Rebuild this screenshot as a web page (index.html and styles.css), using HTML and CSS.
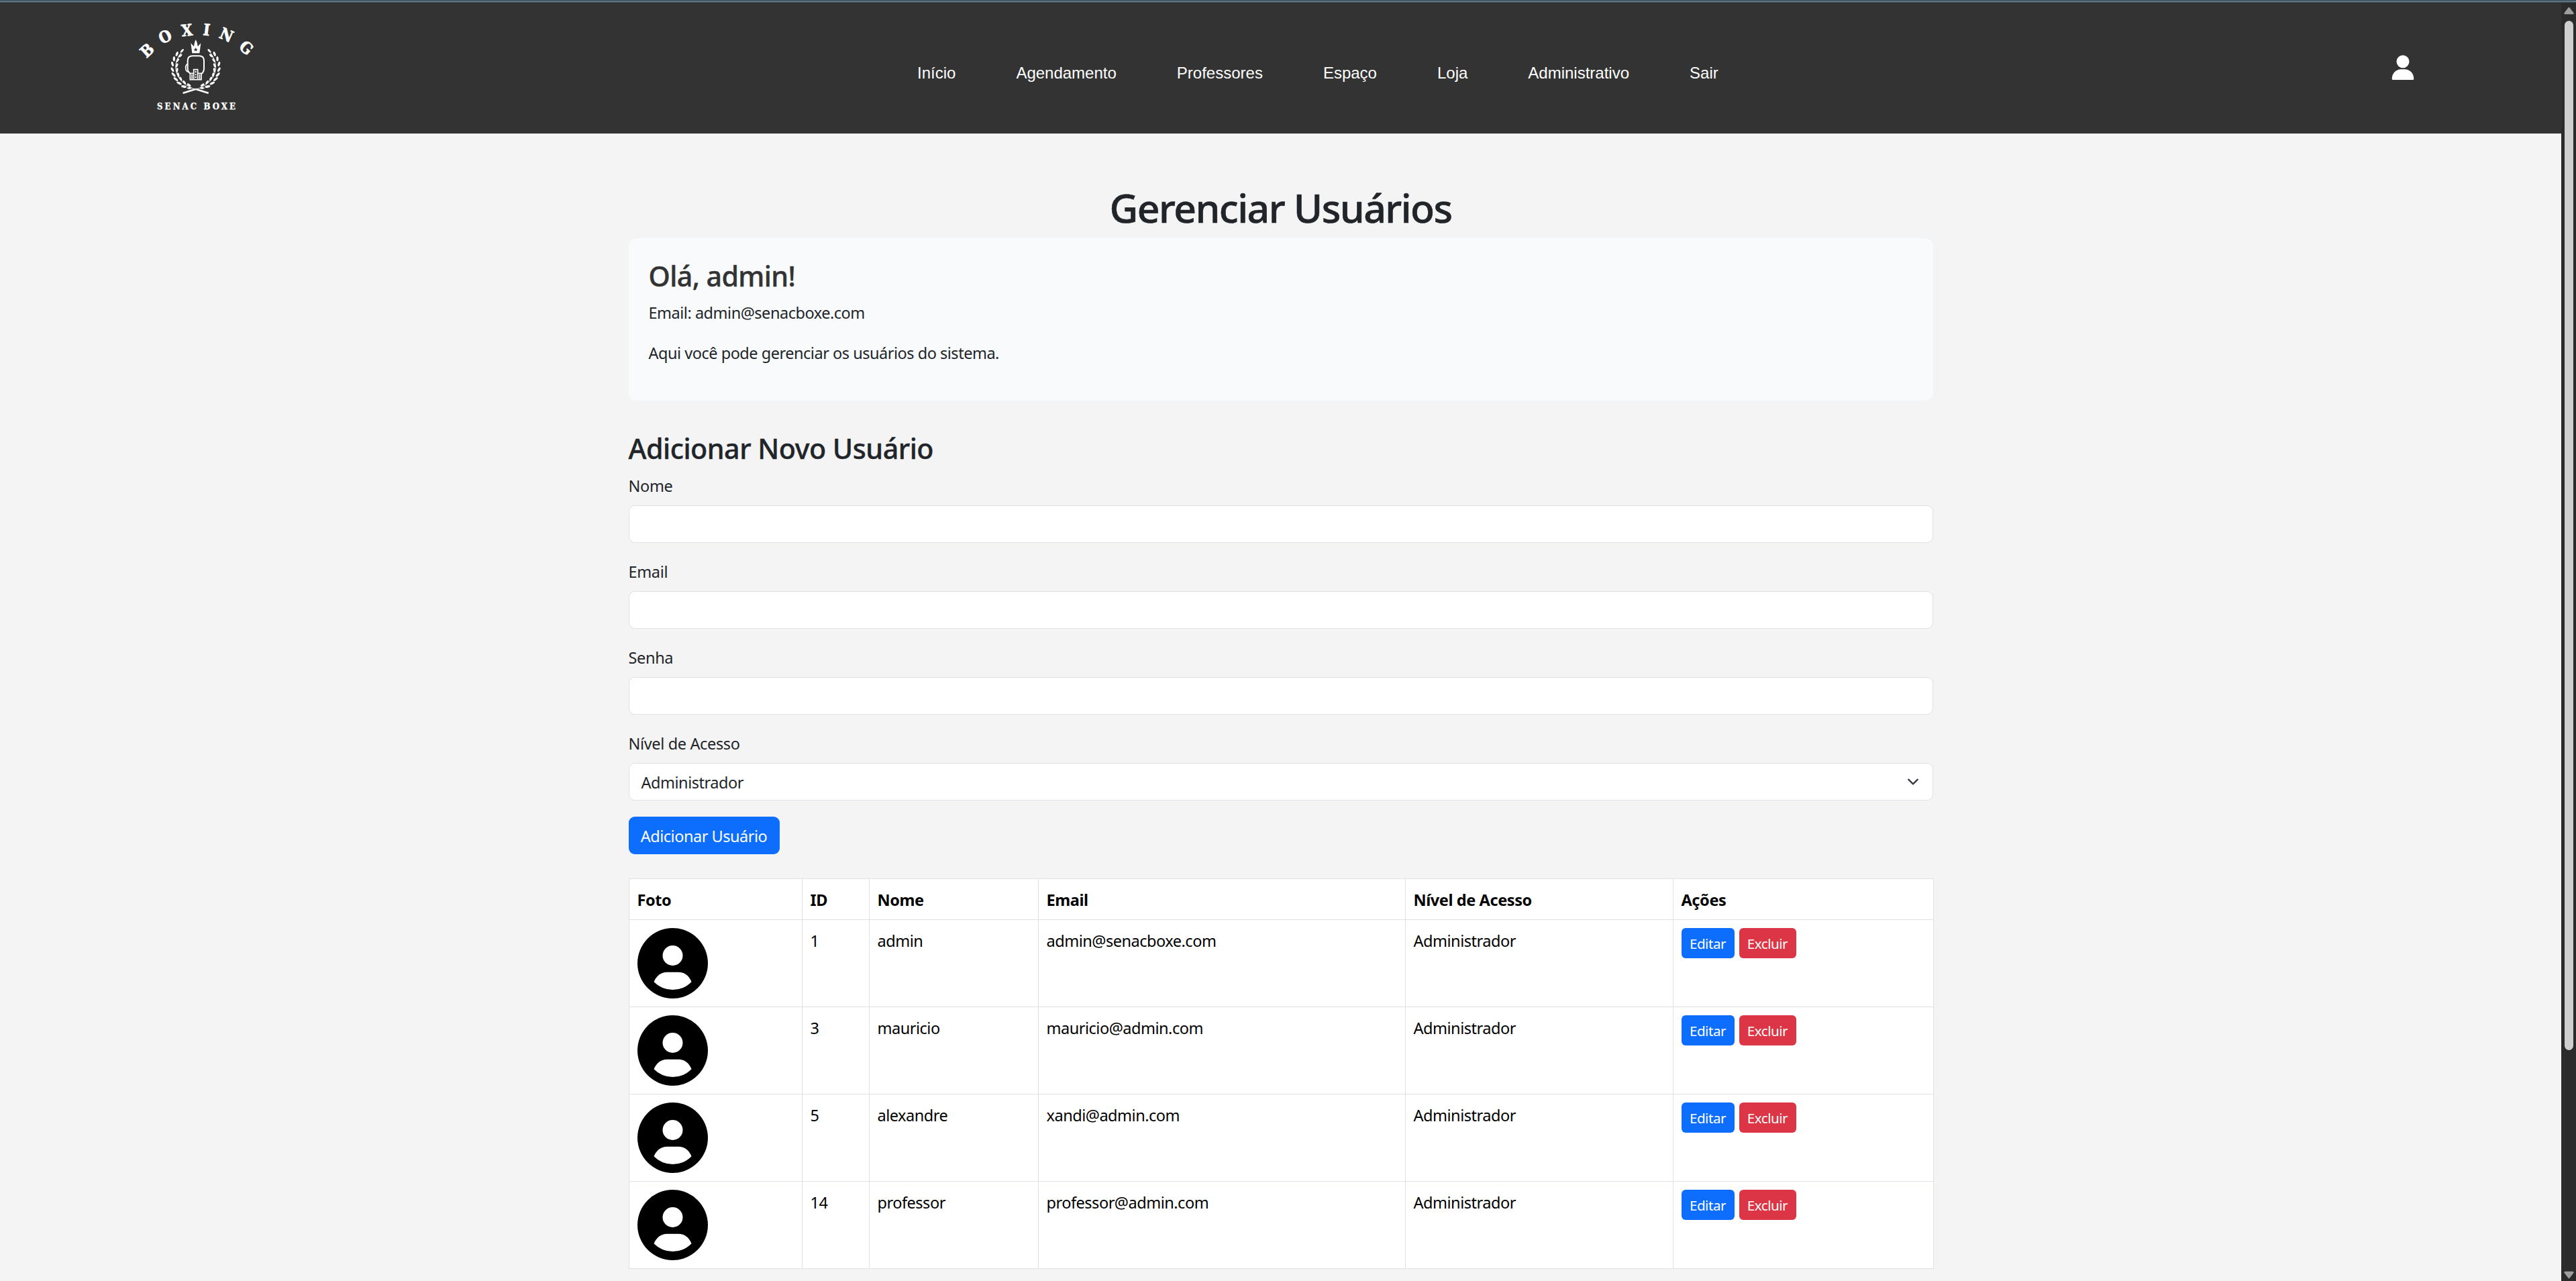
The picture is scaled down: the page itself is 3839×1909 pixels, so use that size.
FILE: index.html
```html
<!DOCTYPE html>
<html lang="pt-BR">
<head>
<meta charset="utf-8">
<title>Gerenciar Usuários</title>
<link rel="stylesheet" href="styles.css">
</head>
<body>
<svg width="0" height="0" class="defs">
  <symbol id="avatar" viewBox="0 0 105 105">
    <circle cx="52.5" cy="52.5" r="52.5" fill="#000"/>
    <circle cx="52.5" cy="41" r="15" fill="#fff"/>
    <path d="M24.5 80.3C28 71 35.500 65.700 44 65.700H61C69.500 65.700 77 71 80.500 80.300Q69 92 52.500 92T24.500 80.300Z" fill="#fff"/>
  </symbol>
</svg>
<div class="strip"></div>
<div class="window">
  <div class="page">
    <header class="header">
      <svg class="logo" viewBox="-30 0 600 420">
        <g class="logo-arc" transform="translate(-60,-90)">
          <text transform="translate(117,224) rotate(-43)" y="26">B</text>
          <text transform="translate(198,163) rotate(-25)" y="26">O</text>
          <text transform="translate(296,134) rotate(-6)" y="26">X</text>
          <text transform="translate(384,132) rotate(7)" y="26">I</text>
          <text transform="translate(473,155) rotate(24)" y="26">N</text>
          <text transform="translate(562,213) rotate(41)" y="26">G</text>
        </g>
        <g transform="translate(-60,-90)">
          <path fill="#fff" fill-rule="evenodd" d="M319 238L313 193L327 208L330 190L335 177L341 190L344 208L358 193L352 238ZM335 212L332 219H326L331 223L329 230L335 226L341 230L339 223L344 219H338Z"/>
          <g fill="none" stroke="#fff" stroke-width="6">
            <path d="M310 328C302 322 299 315 299 306V272C299 258 307 250 321 250H350C364 250 372 258 372 272V306C372 318 368 325 360 331"/>
            <path d="M300 286C291 288 290 294 290 304C290 313 293 320 303 322" stroke-width="5"/>
            <path d="M310 328V356H360V328M310 328H326M344 328H360" stroke-width="5"/>
            <path d="M326 353V311H344V353" stroke-width="5"/>
          </g>
          <path d="M332 318h6v7h-6zM332 331h6v6h-6zM332 342h6v6h-6zM316 333h5v20h-5zM350 333h5v20h-5z" fill="#fff"/>
          <g id="branch">
            <path d="M270 236C225 290 240 370 335 400L392 416" fill="none" stroke="#fff" stroke-width="3"/>
            <path d="M335 398L392 416" stroke="#fff" stroke-width="8"/>
            <g fill="#fff">
              <ellipse cx="274" cy="227" rx="10" ry="4.500" transform="rotate(-48 274 227)"/>
              <ellipse cx="251" cy="241" rx="11" ry="5" transform="rotate(-70 251 241)"/>
              <ellipse cx="266" cy="249" rx="10" ry="4.500" transform="rotate(-40 266 249)"/>
              <ellipse cx="238" cy="263" rx="11" ry="5" transform="rotate(-88 238 263)"/>
              <ellipse cx="254" cy="270" rx="10" ry="4.500" transform="rotate(-55 254 270)"/>
              <ellipse cx="231" cy="286" rx="11" ry="5" transform="rotate(75 231 286)"/>
              <ellipse cx="251" cy="292" rx="10" ry="4.500" transform="rotate(-70 251 292)"/>
              <ellipse cx="231" cy="311" rx="11" ry="5" transform="rotate(62 231 311)"/>
              <ellipse cx="252" cy="313" rx="10" ry="4.500" transform="rotate(-85 252 313)"/>
              <ellipse cx="236" cy="334" rx="12" ry="5" transform="rotate(48 236 334)"/>
              <ellipse cx="257" cy="334" rx="10" ry="4.500" transform="rotate(80 257 334)"/>
              <ellipse cx="246" cy="354" rx="12" ry="5" transform="rotate(38 246 354)"/>
              <ellipse cx="268" cy="352" rx="10" ry="4.500" transform="rotate(65 268 352)"/>
              <ellipse cx="261" cy="372" rx="12" ry="5" transform="rotate(25 261 372)"/>
              <ellipse cx="284" cy="368" rx="10" ry="4.500" transform="rotate(52 284 368)"/>
              <ellipse cx="282" cy="387" rx="12" ry="5" transform="rotate(12 282 387)"/>
              <ellipse cx="305" cy="380" rx="10" ry="4.500" transform="rotate(35 305 380)"/>
              <ellipse cx="306" cy="394" rx="10" ry="4" transform="rotate(0 306 394)"/>
            </g>
          </g>
          <use href="#branch" transform="translate(670,0) scale(-1,1)"/>
          <text class="logo-name" x="162" y="490" textLength="351">SENAC BOXE</text>
        </g>
      </svg>
      <nav class="nav">
        <a>Início</a><a>Agendamento</a><a>Professores</a><a>Espaço</a><a>Loja</a><a>Administrativo</a><a>Sair</a>
      </nav>
      <svg class="user" viewBox="0 0 34 38"><circle cx="17" cy="9.700" r="9.500"/><path d="M.7 35.500C.7 26.500 7.500 21.200 14 21.200H20C26.500 21.200 33.300 26.500 33.300 35.500Q33.300 37 31.800 37H2.200Q.7 37 .7 35.500Z"/></svg>
    </header>
    <main class="container">
      <h1>Gerenciar Usuários</h1>
      <section class="card">
        <h2>Olá, admin!</h2>
        <p>Email: admin@senacboxe.com</p>
        <p>Aqui você pode gerenciar os usuários do sistema.</p>
      </section>
      <h2 class="form-title">Adicionar Novo Usuário</h2>
      <form>
        <div class="field"><label>Nome</label><div class="control"></div></div>
        <div class="field"><label>Email</label><div class="control"></div></div>
        <div class="field"><label>Senha</label><div class="control"></div></div>
        <div class="field"><label>Nível de Acesso</label><div class="control select"><span>Administrador</span><svg viewBox="0 0 16 16"><path d="m2 5 6 6 6-6"/></svg></div></div>
        <button type="button" class="btn primary">Adicionar Usuário</button>
      </form>
      <table>
        <colgroup><col class="c1"><col class="c2"><col class="c3"><col class="c4"><col class="c5"><col class="c6"></colgroup>
        <thead><tr><th>Foto</th><th>ID</th><th>Nome</th><th>Email</th><th>Nível de Acesso</th><th>Ações</th></tr></thead>
        <tbody>
          <tr><td><svg class="avatar"><use href="#avatar"/></svg></td><td>1</td><td>admin</td><td>admin@senacboxe.com</td><td>Administrador</td><td><div class="actions"><a class="btn sm primary">Editar</a><a class="btn sm danger">Excluir</a></div></td></tr>
          <tr><td><svg class="avatar"><use href="#avatar"/></svg></td><td>3</td><td>mauricio</td><td>mauricio@admin.com</td><td>Administrador</td><td><div class="actions"><a class="btn sm primary">Editar</a><a class="btn sm danger">Excluir</a></div></td></tr>
          <tr><td><svg class="avatar"><use href="#avatar"/></svg></td><td>5</td><td>alexandre</td><td>xandi@admin.com</td><td>Administrador</td><td><div class="actions"><a class="btn sm primary">Editar</a><a class="btn sm danger">Excluir</a></div></td></tr>
          <tr><td><svg class="avatar"><use href="#avatar"/></svg></td><td>14</td><td>professor</td><td>professor@admin.com</td><td>Administrador</td><td><div class="actions"><a class="btn sm primary">Editar</a><a class="btn sm danger">Excluir</a></div></td></tr>
        </tbody>
      </table>
    </main>
  </div>
  <div class="scrollbar">
    <svg viewBox="0 0 16 12"><path d="M7 1Q8 0 9 1L15.500 9.500Q16 11.500 14.500 11.500H1.500Q0 11.500 .5 9.500Z"/></svg>
    <div class="thumb"></div>
    <svg class="down" viewBox="0 0 16 12"><path d="M7 1Q8 0 9 1L15.500 9.500Q16 11.500 14.500 11.500H1.500Q0 11.500 .5 9.500Z"/></svg>
  </div>
</div>
</body>
</html>
```
FILE: styles.css
```css
* { box-sizing: border-box; }
body {
  margin: 0;
  height: 1909px;
  overflow: hidden;
  background: #f4f4f4;
  color: #212529;
  font: 23.5px/36px "Noto Sans", sans-serif;
  letter-spacing: -.48px;
}
.defs { display: block; }
.strip { height: 4px; background: linear-gradient(#455a64 2px, #6f8791 2px, #6f8791 3px, #3d4c54 3px); }
.window { display: flex; height: 1905px; }
.page { flex: 1; }
.header {
  height: 195px;
  background: #333;
  display: grid;
  grid-template-columns: 1177px auto 1fr;
  padding: 26px 219px 0 190px;
  color: #fff;
  letter-spacing: 0;
}
.logo { width: 200px; height: 140px; }
.logo-arc { font: bold 71px "DejaVu Serif Condensed", "DejaVu Serif", serif; fill: #fff; stroke: #fff; stroke-width: 2; text-anchor: middle; }
.logo-name { font: bold 39px "DejaVu Serif Condensed", "DejaVu Serif", serif; fill: #fff; stroke: #fff; stroke-width: 1; }
.nav { display: flex; gap: 90px; padding-top: 61px; font: 24px/36px "Liberation Sans", Arial, sans-serif; }
.user { width: 34px; height: 38px; justify-self: end; margin-top: 52px; fill: #fff; }
.container { width: 1944px; margin: 0 auto; padding-top: 75px; }
h1, h2, p { margin: 0; }
h1 { font-size: 58.8px; line-height: 70px; font-weight: 500; text-align: center; margin-bottom: 11px; letter-spacing: -1.5px; -webkit-text-stroke: .6px; }
h2 { font-size: 41.2px; line-height: 50px; font-weight: 500; letter-spacing: -.48px; -webkit-text-stroke: .4px; }
.card { height: 242px; padding: 30px; background: #f8fafc; border-radius: 12px; }
.card h2 { color: #333; margin-bottom: 11px; line-height: 52px; letter-spacing: -.6px; }
.card p { margin-bottom: 24px; }
.form-title { margin-top: 46px; margin-bottom: 12px; }
.field { margin-bottom: 24px; }
.field label { display: block; height: 36px; line-height: 38px; margin-bottom: 12px; letter-spacing: -.35px; }
.control { height: 56px; background: #fff; border: 1px solid #dee2e6; border-radius: 9px; }
.select { display: flex; align-items: center; justify-content: space-between; padding: 0 20px 0 18px; }
.select span { padding-top: 2px; }
.select svg { width: 18px; height: 18px; fill: none; stroke: #343a40; stroke-width: 2; stroke-linecap: round; stroke-linejoin: round; }
.btn { display: inline-flex; align-items: center; justify-content: center; padding: 2px 0 0; border: 0; border-radius: 9px; color: #fff; font: inherit; letter-spacing: -.48px; }
.btn.primary { background: #0d6efd; width: 225px; height: 56px; }
.btn.sm.primary, .btn.sm { font-size: 20.6px; height: 45px; width: 79px; padding-top: 0; border-radius: 6px; }
.btn.sm.danger { background: #dc3545; width: 85px; }
.actions { display: flex; gap: 7px; }
table { width: 1944px; table-layout: fixed; border-collapse: collapse; margin-top: 36px; background: #fff; color: #000; line-height: 38px; }
th, td { border: 1px solid #dee2e6; padding: 12px 12px 10px; text-align: left; vertical-align: top; }
th { font-weight: 700; height: 61px; letter-spacing: -.4px; }
td { height: 130px; }
.c1 { width: 258px; } .c2 { width: 100px; } .c3 { width: 252px; } .c4 { width: 547px; } .c5 { width: 399px; } .c6 { width: 388px; }
.avatar { display: block; width: 105px; height: 105px; }
.scrollbar { width: 22px; background: #2b2b2b; display: flex; flex-direction: column; align-items: center; padding: 6px 0 3px 1px; }
.scrollbar svg { width: 15px; height: 12px; fill: #9f9f9f; }
.scrollbar .down { transform: rotate(180deg); margin-top: auto; }
.thumb { width: 13px; height: 1534px; margin-top: 9px; border-radius: 7px; background: #cfcfcf; }
```
